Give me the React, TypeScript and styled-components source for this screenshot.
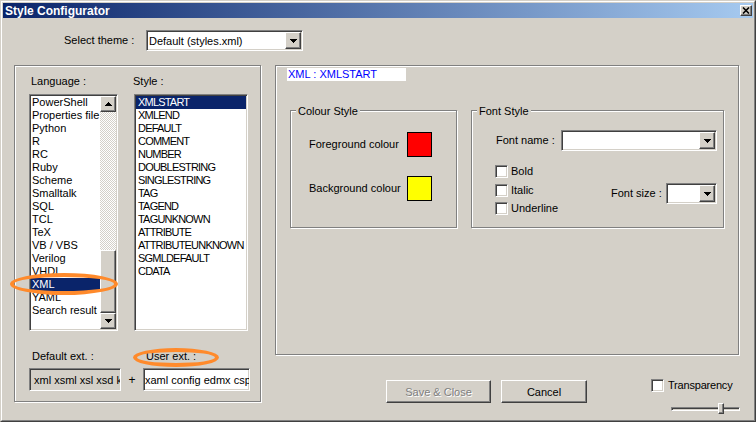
import React from 'react'
import styled, { createGlobalStyle, css } from 'styled-components'

const face = '#d4d0c8'

const GlobalStyle = createGlobalStyle`
  html, body {
    margin: 0;
    padding: 0;
    background: ${face};
  }
  body {
    font-family: 'Liberation Sans', Arial, sans-serif;
    font-size: 11px;
    color: #000;
  }
`

const sunken = css`
  box-sizing: border-box;
  border: 1px solid;
  border-color: #808080 #fff #fff #808080;
  box-shadow: inset 1px 1px 0 #404040, inset -1px -1px 0 ${face};
`
const raised = css`
  box-sizing: border-box;
  border: 1px solid;
  border-color: #fff #404040 #404040 #fff;
  box-shadow: inset -1px -1px 0 #808080;
  background: ${face};
`
const etched = css`
  box-sizing: border-box;
  border: 1px solid #808080;
  box-shadow: inset 1px 1px 0 #fff, 1px 1px 0 #fff;
`

const Window = styled.div`
  position: relative;
  width: 756px;
  height: 422px;
  box-sizing: border-box;
  border: 1px solid;
  border-color: ${face} #404040 #404040 ${face};
  background: ${face};
  overflow: hidden;
`
const Frame = styled.div`
  height: 100%;
  box-sizing: border-box;
  border: 1px solid;
  border-color: #fff #808080 #808080 #fff;
  padding: 1px;
  display: flex;
  flex-direction: column;
`
const TitleBar = styled.div`
  height: 15px;
  display: flex;
  align-items: center;
  justify-content: space-between;
  padding: 0 1px 0 2px;
  background: linear-gradient(to right, #0a246a, #a6caf0);
  color: #fff;
  font-weight: bold;
  font-size: 12px;
`
const CloseBtn = styled.div`
  ${raised};
  width: 12px;
  height: 11px;
  display: flex;
  align-items: center;
  justify-content: center;
`
const Body = styled.div`
  flex: 1;
  padding: 12px 0 0 11px;
  display: flex;
  flex-direction: column;
`
const ThemeRow = styled.div`
  display: flex;
  align-items: center;
  height: 21px;
  padding-left: 50px;
`
const Label = styled.div<{ $w?: number; $indent?: number }>`
  width: ${(p) => (p.$w ? `${p.$w}px` : 'auto')};
  padding-left: ${(p) => p.$indent || 0}px;
  line-height: 13px;
  white-space: nowrap;
`
const Combo = styled.div<{ $w: number }>`
  ${sunken};
  width: ${(p) => p.$w}px;
  height: 21px;
  padding: 1px;
  background: #fff;
  display: flex;
  align-items: center;
  justify-content: space-between;
`
const ComboText = styled.span`
  padding-left: 1px;
  white-space: nowrap;
`
const ArrowBtn = styled.div<{ $h?: number }>`
  ${raised};
  width: 16px;
  height: ${(p) => p.$h || 17}px;
  flex-shrink: 0;
  display: flex;
  align-items: center;
  justify-content: center;
`
const MainRow = styled.div`
  display: flex;
  gap: 14px;
  margin-top: 14px;
  align-items: flex-start;
`
const LeftGroup = styled.div`
  ${etched};
  width: 247px;
  height: 337px;
  padding: 9px 0 0 14px;
`
const ListsGrid = styled.div`
  display: grid;
  grid-template-columns: 89px 114px;
  column-gap: 16px;
  row-gap: 6px;
`
const ListBox = styled.div`
  ${sunken};
  height: 237px;
  padding: 1px;
  background: #fff;
  display: flex;
`
const Items = styled.div<{ $caps?: boolean }>`
  flex: 1;
  min-width: 0;
  overflow: hidden;
  letter-spacing: ${(p) => (p.$caps ? '-0.8px' : '0')};
`
const Item = styled.div<{ $selected?: boolean; $pad: number }>`
  height: 13px;
  line-height: 13px;
  padding-left: ${(p) => p.$pad}px;
  white-space: nowrap;
  background: ${(p) => (p.$selected ? '#0a246a' : 'transparent')};
  color: ${(p) => (p.$selected ? '#fff' : '#000')};
`
const ScrollBar = styled.div`
  width: 16px;
  display: flex;
  flex-direction: column;
  background-image: repeating-conic-gradient(#fff 0 25%, ${face} 0 50%);
  background-size: 2px 2px;
`
const Track = styled.div`
  flex: 1;
`
const Thumb = styled.div`
  ${raised};
  height: 63px;
`
const ExtGrid = styled.div`
  display: grid;
  grid-template-columns: 92px 22px 107px;
  row-gap: 5px;
  margin-top: 19px;
  align-items: center;
`
const Plus = styled.div`
  text-align: center;
  font-size: 12px;
`
const ExtInput = styled.div<{ $disabled?: boolean }>`
  ${sunken};
  height: 23px;
  padding: 1px 2px 1px 4px;
  background: ${(p) => (p.$disabled ? face : '#fff')};
  display: flex;
  align-items: center;
  overflow: hidden;
  white-space: nowrap;
`
const ExtText = styled.span<{ $shift?: number }>`
  margin-left: ${(p) => p.$shift || 0}px;
`
const RightColumn = styled.div`
  width: 465px;
  display: flex;
  flex-direction: column;
`
const RightGroup = styled.div`
  ${etched};
  width: 464px;
  height: 290px;
  padding: 2px 0 0 11px;
`
const XmlTag = styled.div`
  width: 119px;
  height: 13px;
  line-height: 13px;
  padding-left: 1px;
  box-sizing: border-box;
  background: #fff;
  color: #0000ff;
  white-space: nowrap;
`
const GroupsRow = styled.div`
  display: flex;
  gap: 14px;
  margin: 29px 0 0 3px;
`
const SubGroup = styled.div<{ $w: number; $pad: string }>`
  ${etched};
  position: relative;
  width: ${(p) => p.$w}px;
  height: 118px;
  padding: ${(p) => p.$pad};
`
const Legend = styled.div`
  position: absolute;
  top: -6px;
  left: 5px;
  padding: 0 2px;
  background: ${face};
  line-height: 13px;
`
const ColourGrid = styled.div`
  display: grid;
  grid-template-columns: 98px 25px;
  row-gap: 19px;
  align-items: center;
`
const Swatch = styled.div<{ $color: string }>`
  width: 25px;
  height: 25px;
  box-sizing: border-box;
  border: 1px solid #000;
  background: ${(p) => p.$color};
`
const FontBody = styled.div`
  width: 221px;
`
const Row = styled.div`
  display: flex;
  align-items: center;
`
const OptionsRow = styled.div`
  display: flex;
  margin: 14px 0 0 -1px;
`
const CheckCol = styled.div`
  display: flex;
  flex-direction: column;
  gap: 5.5px;
`
const CheckRow = styled.label`
  display: flex;
  align-items: center;
  gap: 3px;
  line-height: 13px;
`
const CheckBox = styled.span`
  ${sunken};
  width: 13px;
  height: 13px;
  background: #fff;
  flex-shrink: 0;
`
const FontSize = styled.div`
  display: flex;
  align-items: center;
  margin: 7px 0 0 auto;
`
const ButtonRow = styled.div`
  display: flex;
  align-items: flex-start;
  margin-top: 25px;
`
const Button = styled.div<{ $w: number; $gap: number; $disabled?: boolean }>`
  ${raised};
  width: ${(p) => p.$w}px;
  height: 23px;
  margin-left: ${(p) => p.$gap}px;
  display: flex;
  align-items: center;
  justify-content: center;
  color: ${(p) => (p.$disabled ? '#808080' : '#000')};
  text-shadow: ${(p) => (p.$disabled ? '1px 1px 0 #fff' : 'none')};
`
const TransBlock = styled.div`
  width: 89px;
  margin: -1px 0 0 auto;
  display: flex;
  flex-direction: column;
`
const TransRow = styled.label`
  display: flex;
  align-items: center;
  gap: 4px;
  line-height: 13px;
  letter-spacing: -0.2px;
`
const Slider = styled.div`
  position: relative;
  width: 69px;
  height: 11px;
  margin: 11px 0 0 20px;
  display: flex;
  align-items: center;
`
const SliderTrack = styled.div`
  width: 100%;
  height: 4px;
  ${sunken};
  box-shadow: inset 1px 1px 0 #404040;
`
const SliderThumb = styled.div`
  ${raised};
  position: absolute;
  left: 47px;
  top: 0;
  width: 6px;
  height: 11px;
`
const Annotation = styled.div<{ $x: number; $y: number; $w: number; $h: number }>`
  position: absolute;
  left: ${(p) => p.$x}px;
  top: ${(p) => p.$y}px;
  width: ${(p) => p.$w}px;
  height: ${(p) => p.$h}px;
  box-sizing: border-box;
  border: 4px solid #ff8a2b;
  border-radius: 50%;
  pointer-events: none;
`

const Arrow = ({ up }: { up?: boolean }) => (
  <svg width="7" height="4" viewBox="0 0 7 4">
    <path
      d={
        up
          ? 'M3 0h1v1H3zM2 1h3v1H2zM1 2h5v1H1zM0 3h7v1H0z'
          : 'M0 0h7v1H0zM1 1h5v1H1zM2 2h3v1H2zM3 3h1v1H3z'
      }
      fill="#000"
    />
  </svg>
)

const languages = [
  'PowerShell',
  'Properties file',
  'Python',
  'R',
  'RC',
  'Ruby',
  'Scheme',
  'Smalltalk',
  'SQL',
  'TCL',
  'TeX',
  'VB / VBS',
  'Verilog',
  'VHDL',
  'XML',
  'YAML',
  'Search result',
]
const styles = [
  'XMLSTART',
  'XMLEND',
  'DEFAULT',
  'COMMENT',
  'NUMBER',
  'DOUBLESTRING',
  'SINGLESTRING',
  'TAG',
  'TAGEND',
  'TAGUNKNOWN',
  'ATTRIBUTE',
  'ATTRIBUTEUNKNOWN',
  'SGMLDEFAULT',
  'CDATA',
]

const Check = ({ label }: { label: string }) => (
  <CheckRow>
    <CheckBox />
    {label}
  </CheckRow>
)

const App: React.FC = () => {
  return (
    <Window>
      <GlobalStyle />
      <Frame>
        <TitleBar>
          <span>Style Configurator</span>
          <CloseBtn>
            <svg width="8" height="7" viewBox="0 0 8 7">
              <path d="M1 0.5L7 6.5M7 0.5L1 6.5" stroke="#000" strokeWidth="1.6" />
            </svg>
          </CloseBtn>
        </TitleBar>
        <Body>
          <ThemeRow>
            <Label $w={82}>Select theme :</Label>
            <Combo $w={157}>
              <ComboText>Default (styles.xml)</ComboText>
              <ArrowBtn>
                <Arrow />
              </ArrowBtn>
            </Combo>
          </ThemeRow>
          <MainRow>
            <LeftGroup>
              <ListsGrid>
                <Label $indent={2}>Language :</Label>
                <Label $indent={0} style={{ marginLeft: -1 }}>
                  Style :
                </Label>
                <ListBox>
                  <Items>
                    {languages.map((l) => (
                      <Item key={l} $pad={1} $selected={l === 'XML'}>
                        {l}
                      </Item>
                    ))}
                  </Items>
                  <ScrollBar>
                    <ArrowBtn $h={16}>
                      <Arrow up />
                    </ArrowBtn>
                    <Track />
                    <Thumb />
                    <ArrowBtn $h={16}>
                      <Arrow />
                    </ArrowBtn>
                  </ScrollBar>
                </ListBox>
                <ListBox>
                  <Items $caps>
                    {styles.map((s) => (
                      <Item key={s} $pad={2} $selected={s === 'XMLSTART'}>
                        {s}
                      </Item>
                    ))}
                  </Items>
                </ListBox>
              </ListsGrid>
              <ExtGrid>
                <Label $indent={3}>Default ext. :</Label>
                <span />
                <Label $indent={3}>User ext. :</Label>
                <ExtInput $disabled>
                  <ExtText>xml xsml xsl xsd kml wsdl</ExtText>
                </ExtInput>
                <Plus>+</Plus>
                <ExtInput>
                  <ExtText $shift={-3}>xaml config edmx csproj</ExtText>
                </ExtInput>
              </ExtGrid>
            </LeftGroup>
            <RightColumn>
              <RightGroup>
                <XmlTag>XML : XMLSTART</XmlTag>
                <GroupsRow>
                  <SubGroup $w={167} $pad="21px 0 0 18px">
                    <Legend>Colour Style</Legend>
                    <ColourGrid>
                      <Label>Foreground colour</Label>
                      <Swatch $color="#ff0000" />
                      <Label>Background colour</Label>
                      <Swatch $color="#ffff00" />
                    </ColourGrid>
                  </SubGroup>
                  <SubGroup $w={253} $pad="19px 0 0 24px">
                    <Legend>Font Style</Legend>
                    <FontBody>
                      <Row>
                        <Label $w={65}>Font name :</Label>
                        <Combo $w={156}>
                          <span />
                          <ArrowBtn>
                            <Arrow />
                          </ArrowBtn>
                        </Combo>
                      </Row>
                      <OptionsRow>
                        <CheckCol>
                          <Check label="Bold" />
                          <Check label="Italic" />
                          <Check label="Underline" />
                        </CheckCol>
                        <FontSize>
                          <Label $w={55}>Font size :</Label>
                          <Combo $w={51}>
                            <span />
                            <ArrowBtn>
                              <Arrow />
                            </ArrowBtn>
                          </Combo>
                        </FontSize>
                      </OptionsRow>
                    </FontBody>
                  </SubGroup>
                </GroupsRow>
              </RightGroup>
              <ButtonRow>
                <Button $w={105} $gap={111} $disabled>
                  Save &amp; Close
                </Button>
                <Button $w={86} $gap={10}>
                  Cancel
                </Button>
                <TransBlock>
                  <TransRow>
                    <CheckBox />
                    Transparency
                  </TransRow>
                  <Slider>
                    <SliderTrack />
                    <SliderThumb />
                  </Slider>
                </TransBlock>
              </ButtonRow>
            </RightColumn>
          </MainRow>
        </Body>
      </Frame>
      <Annotation $x={9} $y={272} $w={108} $h={22} />
      <Annotation $x={132} $y={347} $w={86} $h={19} />
    </Window>
  )
}

export default App
